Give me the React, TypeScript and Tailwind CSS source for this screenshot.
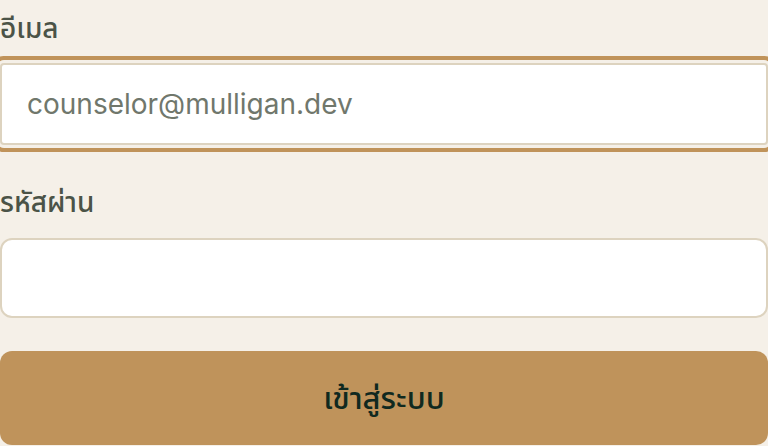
import React from 'react';

const FONT = "font-['Inter','Noto_Sans_Thai','Noto_Sans',sans-serif]";

export default function App() {
  return (
    <div className={`min-h-screen w-full bg-[#f5f0e8] ${FONT}`}>
      <form className="flex flex-col" onSubmit={(e) => e.preventDefault()}>
        {/* Email */}
        <label className="pt-[8px] text-[28px] font-medium leading-[40px] text-[#4b5347]">อีเมล</label>
        <input
          type="email"
          placeholder="counselor@mulligan.dev"
          className="mt-[15px] h-[82px] w-full rounded-[4px] border-2 border-[#ddd3bf] bg-white px-[25px] text-[28px] text-[#2f3a2e] placeholder:text-[#70776c] shadow-[0_0_0_3px_#f5f0e8,0_0_0_7px_#c0935a] outline-none"
        />

        {/* Password */}
        <label className="mt-[37px] text-[28px] font-medium leading-[40px] text-[#4b5347]">รหัสผ่าน</label>
        <input
          type="password"
          className="mt-[16px] h-[80px] w-full rounded-[12px] border-2 border-[#ddd3bf] bg-white px-[25px] text-[28px] outline-none"
        />

        <button
          type="submit"
          className="mt-[33px] h-[94px] w-full rounded-[12px] bg-[#bf935b] text-[31px] font-medium text-[#10291f]"
        >
          เข้าสู่ระบบ
        </button>
      </form>
    </div>
  );
}
